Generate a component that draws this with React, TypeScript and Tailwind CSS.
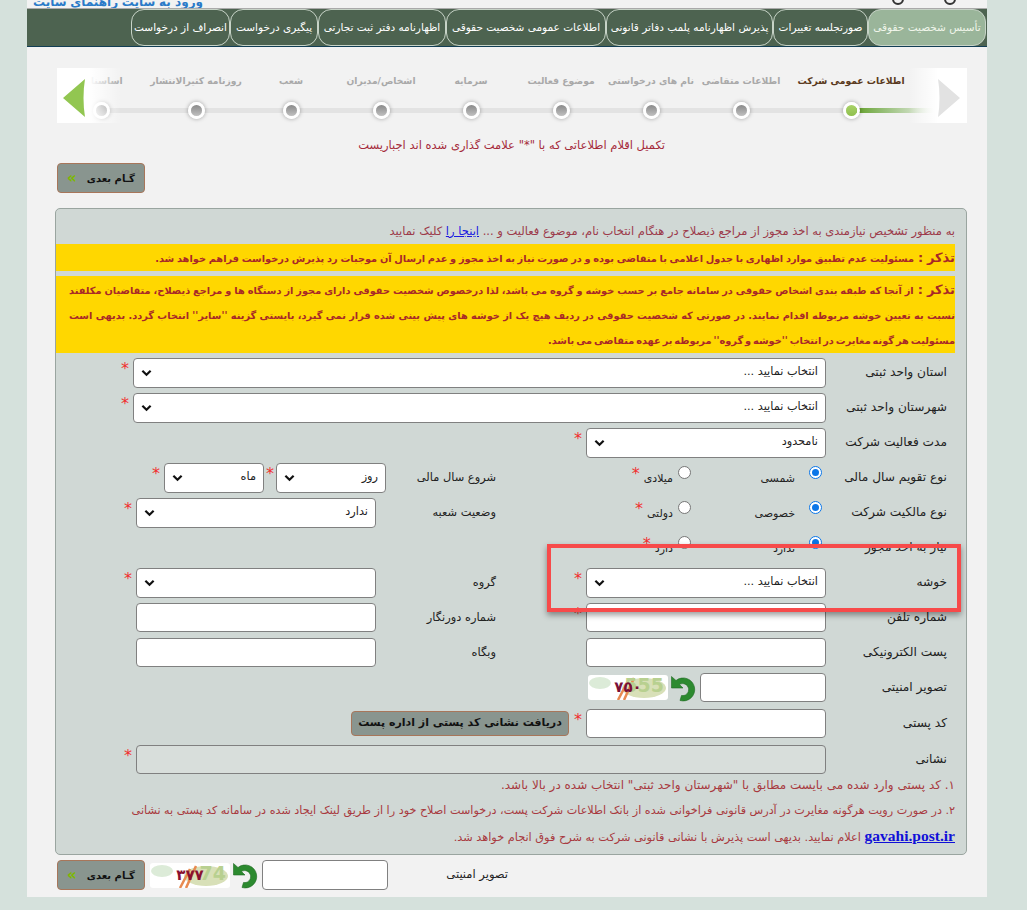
const fontStack = { fontFamily: '"DejaVu Sans", "Noto Sans", sans-serif' };

const tabs = [
  "تأسیس شخصیت حقوقی",
  "صورتجلسه تغییرات",
  "پذیرش اظهارنامه پلمب دفاتر قانونی",
  "اطلاعات عمومی شخصیت حقوقی",
  "اظهارنامه دفتر ثبت تجارتی",
  "پیگیری درخواست",
  "انصراف از درخواست",
];

const tabWidths = ["w-[118px]", "w-[95px]", "w-[167px]", "w-[160px]", "w-[128px]", "w-[88px]", "w-[99px]"];

const steps = [
  { label: "اطلاعات عمومی شرکت", cls: "ml-[20px]" },
  { label: "اطلاعات متقاضی", cls: "" },
  { label: "نام های درخواستی", cls: "" },
  { label: "موضوع فعالیت", cls: "" },
  { label: "سرمایه", cls: "" },
  { label: "اشخاص/مدیران", cls: "" },
  { label: "شعب", cls: "ml-[5px]" },
  { label: "روزنامه کثیرالانتشار", cls: "ml-[5px]" },
  { label: "اساسنامه", cls: "" },
];

function Star({ className = "" }: { className?: string }) {
  return <span className={`-mt-[8px] w-[12px] shrink-0 text-center text-[16px] leading-none text-[#f03030] ${className}`}>*</span>;
}

function Select({ w, text }: { w: string; text?: string }) {
  return (
    <div className={`${w} flex h-[30px] shrink-0 items-center justify-between rounded-[4px] border border-[#808080] bg-white px-[7px] text-[11.3px] text-[#222]`}>
      <span>{text}</span>
      <svg viewBox="0 0 12 12" width="11" height="11" fill="none" stroke="#111" strokeWidth="2.4">
        <path d="M1.5 4l4.5 4.5L10.5 4" />
      </svg>
    </div>
  );
}

function Input({ w, h = "h-[29px]", bg = "bg-white" }: { w: string; h?: string; bg?: string }) {
  return <div className={`${w} ${h} ${bg} shrink-0 rounded-[4px] border border-[#808080]`} />;
}

function Label({ children }: { children: string }) {
  return <div className="w-[121px] shrink-0 text-[12.2px] text-[#222]">{children}</div>;
}

function SubLabel({ children, w = "w-[120px]" }: { children: string; w?: string }) {
  return <div className={`${w} shrink-0 text-[11.4px] text-[#222]`}>{children}</div>;
}

function Radio({ on }: { on?: boolean }) {
  return (
    <span className={`-mt-[10px] block size-[13px] shrink-0 rounded-full border ${on ? "border-[#0b76e8] bg-white p-[2px]" : "border-[#767676] bg-white"}`}>
      {on && <span className="block size-full rounded-full bg-[#0b76e8]" />}
    </span>
  );
}

function RadioPair({ a, b }: { a: string; b: string }) {
  return (
    <div className="flex w-[330px] shrink-0 items-center pr-[4px] text-[11px] text-[#222]">
      <Radio on />
      <span className="mr-[14px] mt-[4px] w-[104px]">{a}</span>
      <Radio />
      <span className="mr-[5px] mt-[4px]">{b}</span>
      <Star className="mr-[2px]" />
    </div>
  );
}

function Row({ children, className = "" }: { children: React.ReactNode; className?: string }) {
  return <div className={`flex h-[35px] items-center pr-[8px] ${className}`}>{children}</div>;
}

function RefreshIcon() {
  return (
    <svg viewBox="0 0 28 28" width="28" height="28" className="shrink-0">
      <path d="M6 6.5A11.5 11.5 0 1 1 10 26.5l1.5-5A6 6 0 1 0 9.5 10.5L13 14H1.5V2.5z" fill="#2c8a2f" stroke="#1e6a22" strokeWidth="0.6" />
    </svg>
  );
}

function Captcha({ text, ghost, color }: { text: string; ghost: string; color: string }) {
  return (
    <div className="relative flex h-[25px] w-[80px] shrink-0 items-center justify-center overflow-hidden rounded-[3px] bg-white">
      <svg viewBox="0 0 80 25" className="absolute inset-0 size-full" aria-hidden>
        <ellipse cx="12" cy="8" rx="11" ry="6" fill="#dcebd8" />
        <ellipse cx="56" cy="13" rx="22" ry="10" fill="#d8e0b8" />
        <path d="M30 25L40 6M36 25L46 3" stroke="#e88a50" strokeWidth="2.5" />
      </svg>
      <span dir="ltr" className="absolute right-[4px] top-[1px] text-[19px] font-bold leading-none text-[#b8d090]">{ghost}</span>
      <span className={`relative text-[15px] font-bold leading-none ${color}`}>{text}</span>
    </div>
  );
}

function NextButton() {
  return (
    <div dir="rtl" className="flex h-[30px] w-[88px] shrink-0 items-center justify-center gap-[10px] rounded-[4px] border border-[#a8765a] bg-[#89958f] text-[10px] font-bold text-[#111]">
      <span>گـام بعدی</span>
      <span className="text-[15px] font-bold leading-none text-[#7db900]">»</span>
    </div>
  );
}

function Stepper() {
  return (
    <div className="relative ml-[30px] mr-[20px] h-[55px]">
      <div className="absolute left-[46px] right-[116px] top-[40px] h-[5px] bg-[#e3e3e3]" />
      <div className="absolute right-[32px] top-[40px] h-[5px] w-[84px] bg-gradient-to-r from-[#5c9c00] to-[#f2f2f2]" />
      <div dir="rtl" className="relative flex h-full pr-[71px]">
        {steps.map((s, i) => (
          <div key={s.label} className={`flex w-[90px] shrink-0 flex-col items-center ${s.cls}`}>
            <div className={`mt-[6px] h-[27px] whitespace-nowrap text-[9.2px] font-bold ${i === 0 ? "text-[#5a3a20]" : "text-[#a9a9a9]"}`}>
              {s.label}
            </div>
            <div className="mt-[1px] size-[17px] rounded-full border-[3px] border-white shadow-[0_0_4px_rgba(0,0,0,0.35)]">
              <div className={`size-full rounded-full ${i === 0 ? "bg-gradient-to-b from-[#a9d268] to-[#8fc04e]" : "bg-gradient-to-b from-[#8b8b8b] to-[#c0c0c0]"}`} />
            </div>
          </div>
        ))}
      </div>
      {/* white fades over both ends */}
      <div className="absolute inset-y-0 left-0 w-[64px] bg-gradient-to-r from-white from-50% to-transparent" />
      <div className="absolute inset-y-0 right-0 w-[58px] bg-gradient-to-l from-white from-50% to-transparent" />
      <svg viewBox="0 0 24 40" width="24" height="40" className="absolute left-[5px] top-[10px]">
        <path d="M1 20L23 1c-2 12-2 26 0 38z" fill="#92c651" />
      </svg>
      <svg viewBox="0 0 24 40" width="24" height="40" className="absolute right-[6px] top-[10px]">
        <path d="M23 20L1 1c2 12 2 26 0 38z" fill="#e2e2e2" />
      </svg>
    </div>
  );
}

export default function App() {
  return (
    <div style={fontStack} className="min-h-[910px] bg-[#d5e1dc]">
      <div className="ml-[27px] h-[897px] w-[960px] bg-[#f2f2f2]">
        {/* top strip, mostly scrolled out */}
        <div className="flex h-[9px] items-end justify-between overflow-hidden border-b border-[#aaa] pl-[6px] pr-[31px]">
          <div dir="rtl" className="flex w-[170px] justify-between text-[12px] font-bold leading-none text-[#2a7ac8]">
            <span>ورود به</span>
            <span>سایت</span>
            <span>راهنمای</span>
            <span>سایت</span>
          </div>
          <span className="flex gap-[40px] pb-[3px]">
            <span className="size-[12px] rounded-full border-2 border-[#333]" />
            <span className="size-[12px] rounded-full border-2 border-[#333]" />
          </span>
        </div>

        {/* tabs */}
        <div dir="rtl" className="flex h-[38px] border-b border-[#123e55] bg-[#4d6350] pr-[1px]">
          {tabs.map((t, i) => (
            <div
              key={t}
              className={`${tabWidths[i]} flex h-[37px] shrink-0 items-center justify-center whitespace-nowrap rounded-[13px] border border-[#c7d3c7] text-[10.5px] ${i === 0 ? "bg-[#9ab59a] text-[#f0f5ea]" : "text-white"}`}
            >
              {t}
            </div>
          ))}
        </div>

        <div className="mt-[21px]">
          <Stepper />
        </div>

        <p dir="rtl" className="mt-[14px] pr-[322px] text-[11.5px] leading-[17px] text-[#a52a3a]">
          تکمیل اقلام اطلاعاتی که با "*" علامت گذاری شده اند اجباریست
        </p>

        <div className="mt-[9px] pl-[30px]">
          <NextButton />
        </div>

        {/* main panel */}
        <div className="relative ml-[28px] mr-[20px] mt-[15px] h-[647px] rounded-[5px] border border-[#9aa5a0] bg-[#d0d8d5]" dir="rtl">
          <div className="pr-[11px] pt-[14px]">
            <p className="h-[21px] text-[11.5px] leading-[17px] text-[#9c3a4a]">
              به منظور تشخیص نیازمندی به اخذ مجوز از مراجع ذیصلاح در هنگام انتخاب نام، موضوع فعالیت و ... <a className="text-[#1a1ae0] underline">اینجا را</a> کلیک نمایید
            </p>
            <div className="h-[27px] whitespace-nowrap bg-[#ffd700] text-[9.8px] font-bold leading-[27px] text-[#a82828] [word-spacing:-0.7px]">
              <span className="text-[13px]">تذکر : </span>
              مسئولیت عدم تطبیق موارد اظهاری با جدول اعلامی با متقاضی بوده و در صورت نیاز به اخذ مجوز و عدم ارسال آن موجبات رد پذیرش درخواست فراهم خواهد شد.
            </div>
            <div className="mt-[5px] h-[77px] bg-[#ffd700] pl-[13px] pt-[1px] text-[9.8px] font-bold leading-[25px] text-[#a82828] [word-spacing:-1.5px]">
              <p className="text-justify [text-align-last:justify]">
                <span className="text-[13px]">تذکر : </span>
                از آنجا که طبقه بندی اشخاص حقوقی در سامانه جامع بر حسب خوشه و گروه می باشد، لذا درخصوص شخصیت حقوقی دارای مجوز از دستگاه ها و مراجع ذیصلاح، متقاضیان مکلفند
              </p>
              <p className="text-justify [text-align-last:justify]">
                نسبت به تعیین خوشه مربوطه اقدام نمایند. در صورتی که شخصیت حقوقی در ردیف هیچ یک از خوشه های پیش بینی شده قرار نمی گیرد، بایستی گزینه ''سایر'' انتخاب گردد. بدیهی است
              </p>
              <p>مسئولیت هر گونه مغایرت در انتخاب ''خوشه و گروه'' مربوطه بر عهده متقاضی می باشد.</p>
            </div>
          </div>

          <div className="mt-[2px] pr-[11px]">
            <Row>
              <Label>استان واحد ثبتی</Label>
              <Select w="w-[693px]" text="انتخاب نمایید ..." />
              <Star className="mr-[2px]" />
            </Row>
            <Row>
              <Label>شهرستان واحد ثبتی</Label>
              <Select w="w-[693px]" text="انتخاب نمایید ..." />
              <Star className="mr-[2px]" />
            </Row>
            <Row>
              <Label>مدت فعالیت شرکت</Label>
              <Select w="w-[240px]" text="نامحدود" />
              <Star className="mr-[2px]" />
            </Row>
            <Row>
              <Label>نوع تقویم سال مالی</Label>
              <RadioPair a="شمسی" b="میلادی" />
              <SubLabel w="w-[110px]">شروع سال مالی</SubLabel>
              <Select w="w-[110px]" text="روز" />
              <Star />
              <Select w="w-[100px]" text="ماه" />
              <Star className="mr-[2px]" />
            </Row>
            <Row>
              <Label>نوع مالکیت شرکت</Label>
              <RadioPair a="خصوصی" b="دولتی" />
              <SubLabel>وضعیت شعبه</SubLabel>
              <Select w="w-[240px]" text="ندارد" />
              <Star className="mr-[2px]" />
            </Row>
            <Row>
              <Label>نیاز به اخذ مجوز</Label>
              <RadioPair a="ندارد" b="دارد" />
            </Row>
            <Row>
              <Label>خوشه</Label>
              <Select w="w-[240px]" text="انتخاب نمایید ..." />
              <div className="flex w-[90px] shrink-0">
                <Star className="mr-[2px]" />
              </div>
              <SubLabel>گروه</SubLabel>
              <Select w="w-[240px]" />
              <Star className="mr-[2px]" />
            </Row>
            <Row>
              <Label>شماره تلفن</Label>
              <Input w="w-[240px]" />
              <div className="flex w-[90px] shrink-0">
                <Star className="mr-[2px]" />
              </div>
              <SubLabel>شماره دورنگار</SubLabel>
              <Input w="w-[240px]" />
            </Row>
            <Row>
              <Label>پست الکترونیکی</Label>
              <Input w="w-[240px]" />
              <div className="w-[90px] shrink-0" />
              <SubLabel>وبگاه</SubLabel>
              <Input w="w-[240px]" />
            </Row>
            <Row>
              <Label>تصویر امنیتی</Label>
              <Input w="w-[126px]" />
              <div className="mr-[2px]">
                <RefreshIcon />
              </div>
              <div className="mr-[2px]">
                <Captcha text="۷۵۰" ghost="555" color="text-[#7a1036]" />
              </div>
            </Row>
            <Row className="mt-[1px]">
              <Label>کد پستی</Label>
              <Input w="w-[240px]" />
              <div className="flex w-[17px] shrink-0">
                <Star className="mr-[2px]" />
              </div>
              <div className="flex h-[25px] w-[218px] shrink-0 items-center justify-center rounded-[4px] border border-[#a8765a] bg-[#89958f] text-[11px] font-bold text-[#111]">
                دریافت نشانی کد پستی از اداره پست
              </div>
            </Row>
            <Row className="mt-[1px]">
              <Label>نشانی</Label>
              <Input w="w-[690px]" bg="bg-[#d8dedb]" />
              <Star className="mr-[2px]" />
            </Row>
          </div>

          <div className="-mt-[4px] pr-[11px] leading-[25px] text-[#a83a40]">
            <p className="text-[12px]">۱. کد پستی وارد شده می بایست مطابق با "شهرستان واحد ثبتی" انتخاب شده در بالا باشد.</p>
            <p className="text-[11.2px]">۲. در صورت رویت هرگونه مغایرت در آدرس قانونی فراخوانی شده از بانک اطلاعات شرکت پست، درخواست اصلاح خود را از طریق لینک ایجاد شده در سامانه کد پستی به نشانی</p>
            <p className="text-[11.3px]">
              <a className="font-['Liberation_Serif',serif] text-[15.5px] font-bold text-[#1010d8] underline">gavahi.post.ir</a> اعلام نمایید. بدیهی است پذیرش با نشانی قانونی شرکت به شرح فوق انجام خواهد شد.
            </p>
          </div>

          {/* red annotation frame */}
          <div className="absolute left-[491px] top-[335px] h-[68px] w-[414px] border-4 border-[#f74a4a] shadow-[0_3px_6px_rgba(0,0,0,0.4)]" />
        </div>

        {/* bottom */}
        <div dir="rtl" className="mt-[5px] flex h-[30px] items-center pr-[479px]">
          <span className="w-[120px] shrink-0 text-[11.5px] text-[#222]">تصویر امنیتی</span>
          <Input w="w-[126px]" h="h-[30px]" />
          <div className="mr-[2px]">
            <RefreshIcon />
          </div>
          <div className="mr-[2px]">
            <Captcha text="۳۷۷" ghost="74" color="text-[#8a1030]" />
          </div>
          <div className="mr-[5px]">
            <NextButton />
          </div>
        </div>
      </div>
    </div>
  );
}
